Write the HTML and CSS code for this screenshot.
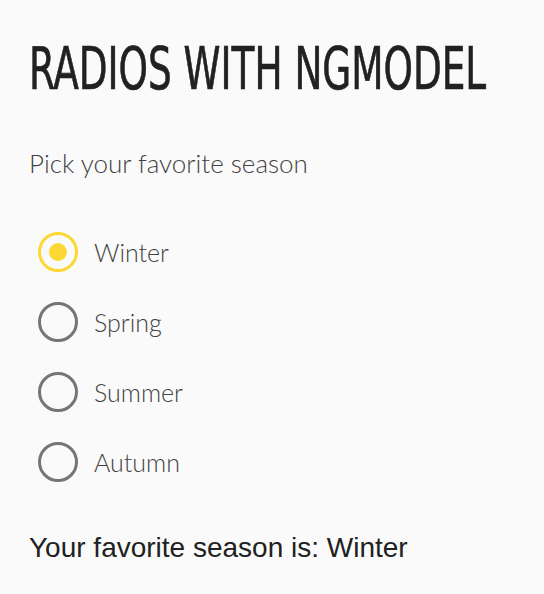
FILE: index.html
```html
<!DOCTYPE html>
<html>
<head>
<meta charset="utf-8">
<link rel="stylesheet" href="styles.css">
</head>
<body>
<main class="page">
  <h1 class="title"><span class="title-text">RADIOS WITH NGMODEL</span></h1>
  <p class="prompt">Pick your favorite season</p>
  <div class="group" role="radiogroup">
    <label class="radio checked"><span class="ring"><span class="dot"></span></span><span class="label">Winter</span></label>
    <label class="radio"><span class="ring"></span><span class="label">Spring</span></label>
    <label class="radio"><span class="ring"></span><span class="label">Summer</span></label>
    <label class="radio"><span class="ring"></span><span class="label">Autumn</span></label>
  </div>
  <p class="result">Your favorite season is: Winter</p>
</main>
</body>
</html>
```
FILE: styles.css
```css
html, body {
  margin: 0;
  padding: 0;
  background: #fafafa;
}
.page {
  padding: 38px 29px 0 29px;
}
.title {
  margin: 0;
  height: 62px;
  font-family: "DejaVu Sans Condensed", "Liberation Sans Narrow", sans-serif;
  font-weight: 400;
  font-size: 44px;
  line-height: 62px;
  color: #212121;
}
.title-text {
  display: inline-block;
  transform: scale(0.944, 1.33);
  transform-origin: left center;
  -webkit-text-stroke: 0.5px #212121;
}
.prompt {
  margin: 43px 0 0 0;
  font-family: Lato, "Open Sans", sans-serif;
  font-weight: 300;
  font-size: 26px;
  line-height: 40px;
  color: #424242;
}
.group {
  display: flex;
  flex-direction: column;
  gap: 30px;
  margin-top: 49px;
  padding-left: 9px;
}
.radio {
  display: flex;
  align-items: center;
  height: 40px;
  gap: 16px;
}
.ring {
  box-sizing: border-box;
  width: 40px;
  height: 40px;
  border-radius: 50%;
  border: 3px solid #757575;
  display: flex;
  align-items: center;
  justify-content: center;
}
.checked .ring {
  border-color: #fdd835;
}
.dot {
  width: 18px;
  height: 18px;
  border-radius: 50%;
  background: #fdd835;
}
.label {
  font-family: Lato, "Open Sans", sans-serif;
  font-weight: 300;
  font-size: 25px;
  color: #424242;
}
.result {
  margin: 50px 0 0 0;
  font-family: "Liberation Sans", Arial, sans-serif;
  font-size: 28px;
  line-height: 32px;
  color: #212121;
}
```
